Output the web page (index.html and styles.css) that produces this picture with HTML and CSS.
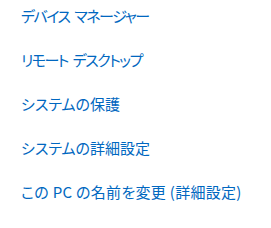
FILE: index.html
```html
<!DOCTYPE html>
<html>
<head>
<meta charset="UTF-8">
<title>関連設定</title>
<link rel="stylesheet" href="styles.css">
</head>
<body>
<div class="links">
	<a class="link narrow" href="#">デバイス マネージャー</a>
	<a class="link narrow" href="#">リモート デスクトップ</a>
	<a class="link" href="#">システムの保護</a>
	<a class="link" href="#">システムの詳細設定</a>
	<a class="link wide" href="#">この PC の名前を変更 (詳細設定)</a>
</div>
</body>
</html>
```

FILE: styles.css
```css
body{
	margin:0px;
	background-color:#ffffff;
	font-family:"Noto Sans CJK JP", sans-serif;
}
.links{
	display:flex;
	flex-direction:column;
	align-items:flex-start;
	gap:22px;
	padding:5px 0px 0px 21px;
}
.link{
	font-size:15px;
	line-height:22px;
	color:#0067c0;
	text-decoration:none;
	font-feature-settings:"palt";
}
.narrow{
	letter-spacing:-1.5px;
	word-spacing:3px;
}
.wide{
	letter-spacing:0.3px;
}
```
